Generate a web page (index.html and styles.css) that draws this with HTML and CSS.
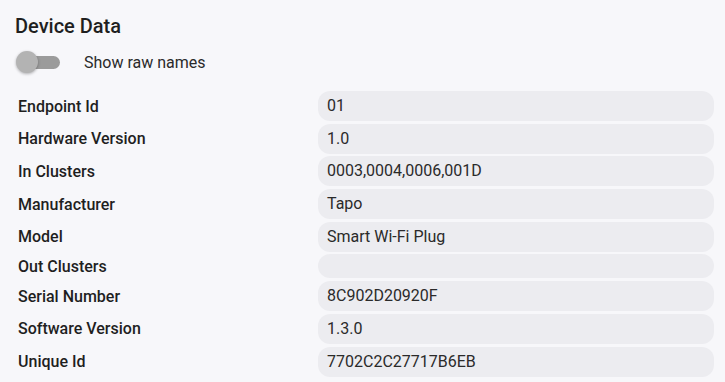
FILE: index.html
```html
<!DOCTYPE html>
<html>
	<head>
		<meta charset="UTF-8">
		<title>Device Data</title>
		<link rel="stylesheet" href="styles.css">
	</head>
	<body>
		<div class="card">
			<h2 class="title">Device Data</h2>
			<label class="switch-row">
				<span class="switch"><span class="track"></span><span class="thumb"></span></span>
				<span class="switch-text">Show raw names</span>
			</label>
			<div class="data">
				<div class="key">Endpoint Id</div><div class="val">01</div>
				<div class="key">Hardware Version</div><div class="val">1.0</div>
				<div class="key">In Clusters</div><div class="val">0003,0004,0006,001D</div>
				<div class="key">Manufacturer</div><div class="val">Tapo</div>
				<div class="key">Model</div><div class="val">Smart Wi-Fi Plug</div>
				<div class="key">Out Clusters</div><div class="val"></div>
				<div class="key">Serial Number</div><div class="val">8C902D20920F</div>
				<div class="key">Software Version</div><div class="val">1.3.0</div>
				<div class="key">Unique Id</div><div class="val">7702C2C27717B6EB</div>
			</div>
		</div>
	</body>
</html>
```

FILE: styles.css
```css
html, body{
	margin: 0;
	padding: 0;
	background: #f7f7fa;
}
body{
	font-family: Roboto, "Liberation Sans", sans-serif;
	color: #1f1f1f;
}
.card{
	padding: 12px 11px 0 15px;
}
.title{
	margin: 0;
	font-size: 20px;
	font-weight: 500;
	line-height: 28px;
}
.switch-row{
	display: flex;
	align-items: center;
	height: 24px;
	margin-top: 10px;
}
.switch{
	position: relative;
	width: 45px;
	height: 24px;
	flex: none;
}
.track{
	position: absolute;
	left: 2px;
	right: 0;
	top: 6px;
	height: 13px;
	border-radius: 7px;
	background: #9b9b9b;
}
.thumb{
	position: absolute;
	left: 1px;
	top: 1px;
	width: 22px;
	height: 22px;
	border-radius: 50%;
	background: #b3b3b3;
	box-shadow: 0 1px 3px rgba(0,0,0,.3);
}
.switch-text{
	margin-left: 24px;
	font-size: 16px;
	color: #2a2a2a;
}
.data{
	display: grid;
	grid-template-columns: 303px 1fr;
	row-gap: 2.7px;
	margin-top: 17px;
	align-items: center;
}
.key{
	padding-left: 3px;
	font-size: 16px;
	font-weight: 500;
}
.val{
	background: #ececf0;
	border-radius: 12px;
	padding: 6px 9px;
	min-height: 12px;
	line-height: 18px;
	font-size: 16px;
	color: #2a2a2a;
}
```
